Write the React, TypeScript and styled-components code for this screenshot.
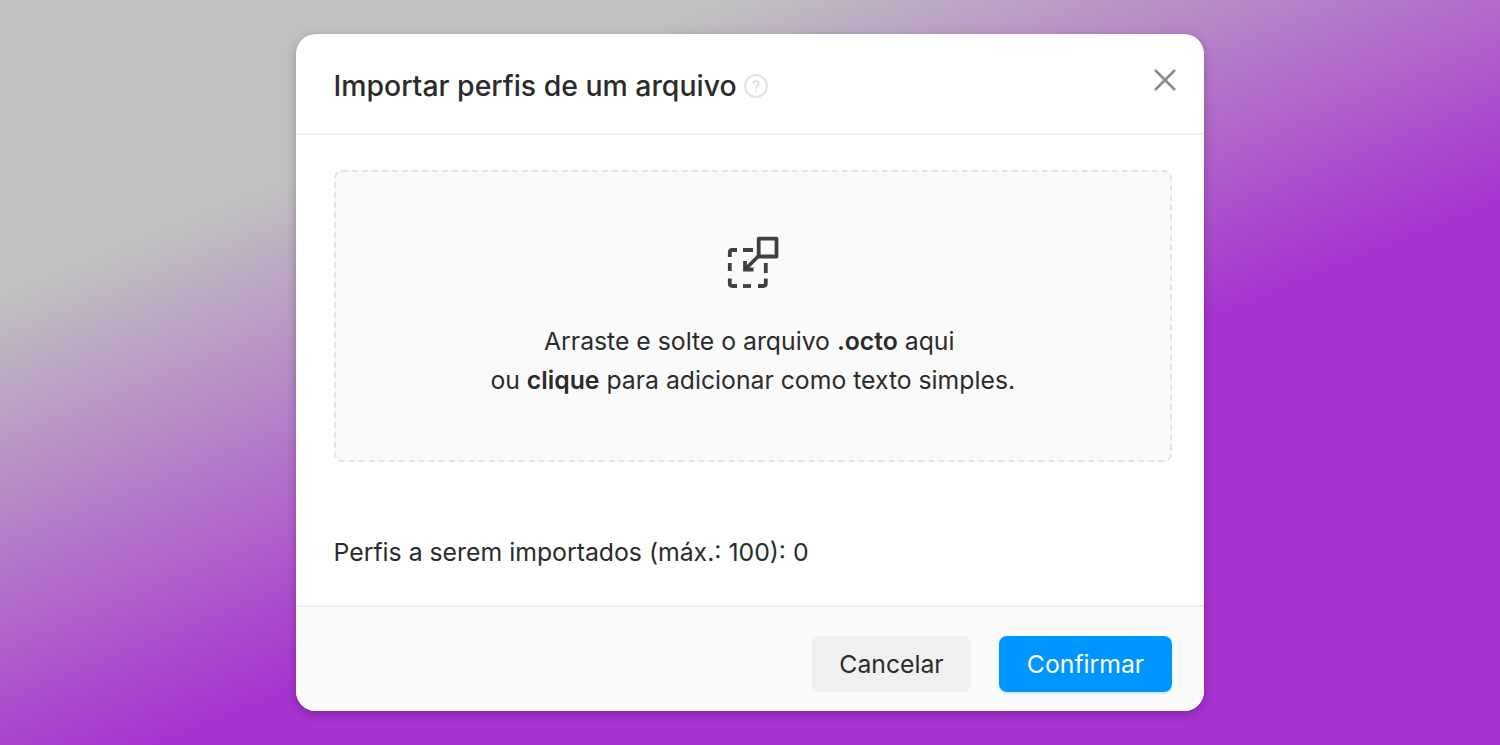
import React from "react";
import styled, { createGlobalStyle } from "styled-components";

const Global = createGlobalStyle`
  html, body { margin: 0; padding: 0; height: 100%; }
  #root { height: 100%; }
  * { box-sizing: border-box; }
  body { font-family: Inter, "Liberation Sans", sans-serif; overflow: hidden; }
`;

const Page = styled.div`
  width: 1500px;
  height: 745px;
  display: flex;
  align-items: center;
  justify-content: center;
  background: linear-gradient(158deg, #c0c0c0 0%, #c0c0c0 22%, #a733d0 60%, #a733d0 100%);
`;

const Modal = styled.div`
  width: 908px;
  height: 677px;
  display: flex;
  flex-direction: column;
  background: #fff;
  border-radius: 20px;
  overflow: hidden;
  box-shadow: 0 3px 10px rgba(0, 0, 0, 0.25);
`;

const Header = styled.header`
  height: 101px;
  flex: none;
  display: flex;
  align-items: flex-start;
  justify-content: space-between;
  padding: 0 26px 0 37.5px;
  border-bottom: 2px solid #f1f1f1;
`;

const TitleRow = styled.div`
  display: flex;
  align-items: center;
  gap: 7px;
  margin-top: 33px;
`;

const Title = styled.h1`
  margin: 0;
  font-size: 28.4px;
  line-height: 38px;
  font-weight: 500;
  color: #2b2b2b;
`;

const CloseButton = styled.button`
  margin-top: 33px;
  padding: 0;
  border: 0;
  background: none;
  width: 26px;
  height: 26px;
  display: block;
`;

const Body = styled.main`
  flex: 1;
  display: flex;
  flex-direction: column;
  padding: 35px 32px 0 37.5px;
`;

const DropZone = styled.div`
  height: 292px;
  display: flex;
  flex-direction: column;
  align-items: center;
  background: #fafafa;
  border: 2px dashed #e4e4e4;
  border-radius: 8px;
  padding-top: 64px;
`;

const DropText = styled.p`
  margin: 34px 0 0;
  font-size: 24.75px;
  line-height: 39px;
  color: #2b2b2b;
  text-align: center;
`;

const Strong = styled.b`
  font-weight: 600;
`;

const Count = styled.p`
  margin: 71px 0 0;
  font-size: 24.8px;
  line-height: 38px;
  color: #2b2b2b;
`;

const Footer = styled.footer`
  height: 106px;
  flex: none;
  display: flex;
  justify-content: flex-end;
  gap: 28px;
  padding: 29px 32px 0 0;
  background: #fafafa;
  border-top: 2px solid #eeeeee;
`;

const Button = styled.button<{ $primary?: boolean }>`
  height: 56px;
  width: ${(p) => (p.$primary ? "173px" : "159px")};
  border: 0;
  border-radius: 8px;
  font-family: inherit;
  font-size: 24.75px;
  font-weight: 400;
  background: ${(p) => (p.$primary ? "#0096ff" : "#f0f0f0")};
  color: ${(p) => (p.$primary ? "#fff" : "#2b2b2b")};
  box-shadow: ${(p) => (p.$primary ? "0 2px 2px rgba(0,150,255,0.15)" : "none")};
`;

const HelpIcon = () => (
  <svg width="24" height="24" viewBox="0 0 24 24" fill="none">
    <circle cx="12" cy="12" r="11" stroke="#e2e2e2" strokeWidth="1.9" />
    <path
      d="M9.1 9.7c0-1.6 1.3-2.7 2.9-2.7s2.9 1 2.9 2.5c0 2.3-2.9 2.3-2.9 4.6"
      stroke="#dcdcdc"
      strokeWidth="1.6"
      strokeLinecap="round"
    />
    <circle cx="12" cy="17.1" r="1" fill="#dcdcdc" />
  </svg>
);

const CloseIcon = () => (
  <svg width="26" height="26" viewBox="0 0 26 26" fill="none">
    <path d="M3 3L23 23M23 3L3 23" stroke="#8c8c8c" strokeWidth="2.6" />
  </svg>
);

const ImportIcon = () => (
  <svg width="52" height="52" viewBox="0 0 52 52" fill="none" stroke="#404040" strokeWidth="3.8">
    <path d="M31.7 2.7H49.5V20.5H31.7Z" strokeLinejoin="round" />
    <path d="M31.5 20L18.5 33" />
    <path d="M18 25V33.5H26.5" />
    <path d="M2.8 21V16.5Q2.8 14 5.3 14H10" />
    <path d="M16 14H26" />
    <path d="M38.8 27V37" />
    <path d="M38.8 42.5V47.5Q38.8 50 36.3 50H31" />
    <path d="M24 50H16" />
    <path d="M10 50H5.3Q2.8 50 2.8 47.5V42.5" />
    <path d="M2.8 35V27" />
  </svg>
);

export default function App() {
  return (
    <Page>
      <Global />
      <Modal>
        <Header>
          <TitleRow>
            <Title>Importar perfis de um arquivo</Title>
            <HelpIcon />
          </TitleRow>
          <CloseButton aria-label="Fechar">
            <CloseIcon />
          </CloseButton>
        </Header>
        <Body>
          <DropZone>
            <ImportIcon />
            <DropText>
              Arraste e solte o arquivo <Strong>.octo</Strong> aqui{"\u00a0"}
              <br />
              ou <Strong>clique</Strong> para adicionar como texto simples.
            </DropText>
          </DropZone>
          <Count>Perfis a serem importados (máx.: 100): 0</Count>
        </Body>
        <Footer>
          <Button>Cancelar</Button>
          <Button $primary>Confirmar</Button>
        </Footer>
      </Modal>
    </Page>
  );
}
